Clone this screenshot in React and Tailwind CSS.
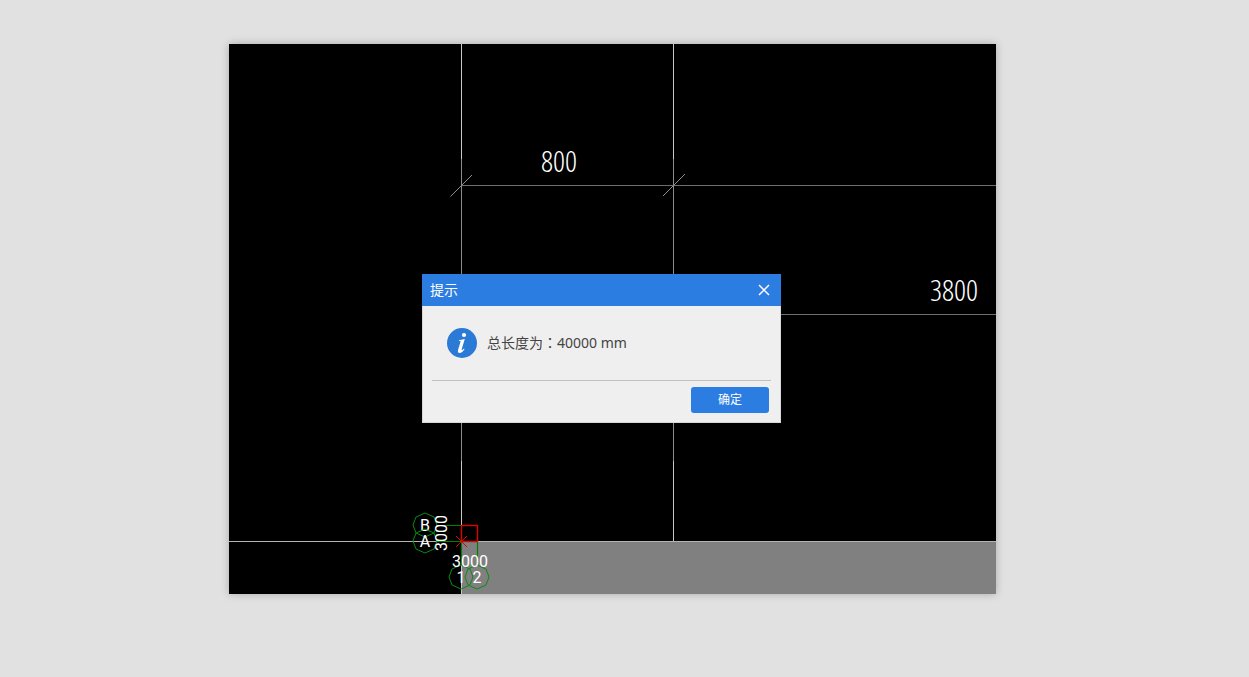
import { useState } from 'react';

const BUBBLES = [
    { label: 'B', x: 196, y: 481 },
    { label: 'A', x: 196, y: 497 },
    { label: '1', x: 232, y: 533 },
    { label: '2', x: 248, y: 533 }
];

const OCTAGON = '0,-12 9,-8 12,0 9,8 0,12 -9,8 -12,0 -9,-8';

function GridBubble({ label, x, y }) {
    return (
        <g transform={`translate(${x} ${y})`}>
            <polygon points={OCTAGON} fill="none" stroke="#0b8a12" strokeWidth="1" />
            <text y="6" textAnchor="middle" className="fill-white font-['Roboto',sans-serif] text-[16px]">{label}</text>
        </g>
    );
}

function Drawing() {
    return (
        <svg viewBox="0 0 767 550" className="block h-auto w-full bg-black">
            {/* ground area */}
            <rect x="233" y="498" width="534" height="52" fill="#808080" />

            {/* axis and dimension lines */}
            <g shapeRendering="crispEdges" fill="none">
                <path d="M232.5 0V115M232.5 417V550M444.5 0V115M444.5 417V497" stroke="#c8c8c8" />
                <path d="M232.5 115V417M444.5 115V417" stroke="#8c8c8c" />
                <path d="M232 141.5H767M444 270.5H767" stroke="#6e6e6e" />
                <path d="M0 497.5H767" stroke="#b4b4b4" />
            </g>
            <path d="M221.5 152.5L243 131M434 152L456 130" stroke="#8c8c8c" />

            {/* dimension values */}
            <g className="fill-white font-['Open_Sans_Condensed_Light','Open_Sans_Condensed','Roboto_Condensed',sans-serif] text-[30px] font-light">
                <text x="330" y="128" textAnchor="middle">800</text>
                <text x="725" y="257" textAnchor="middle">3800</text>
            </g>

            {/* grid axes */}
            <path d="M208 481.5H232M208 497.5H232M232.5 498V521M248.5 498V521" fill="none" stroke="#008000" strokeWidth="1.2" />
            {BUBBLES.map(b => <GridBubble key={b.label} {...b} />)}
            <g className="fill-white font-['Roboto',sans-serif] text-[16px]">
                <text x="241" y="523" textAnchor="middle">3000</text>
                <text transform="translate(218 489) rotate(-90)" textAnchor="middle">3000</text>
            </g>
            <rect x="232.5" y="481.5" width="16" height="16" fill="none" stroke="#e00000" strokeWidth="1.4" />
            <path d="M227 492L238 503M238 492L227 503" fill="none" stroke="#e00000" />
        </svg>
    );
}

function InfoIcon() {
    return (
        <svg viewBox="0 0 30 30" className="size-[30px] shrink-0" aria-hidden="true">
            <circle cx="15" cy="15" r="15" fill="#2a7ad6" />
            <circle cx="17" cy="7" r="2.1" fill="#fff" />
            <path d="M12 12.2L17.8 11L14.7 21.3C14.4 22.5 15.2 22.5 16.9 20.4L17.6 20.9C16 23.6 14.4 25 12.6 25C10.8 25 10.6 23.5 11.1 21.8L13.5 13.8C13.7 13 13.2 12.9 12 13Z" fill="#fff" />
        </svg>
    );
}

function MessageDialog({ onClose }) {
    return (
        <div role="dialog" aria-labelledby="dialog-title" className="absolute left-[193px] top-[230px] w-[359px] border border-t-0 border-[#d8d8d8] bg-[#efefef]">
            <div className="-mx-px flex h-8 items-center justify-between bg-[#2b7de1] px-2 text-white">
                <h2 id="dialog-title" className="text-sm">提示</h2>
                <button type="button" aria-label="关闭" onClick={onClose} className="flex size-[18px] items-center justify-center">
                    <svg viewBox="0 0 12 12" className="size-3" fill="none" stroke="currentColor" strokeWidth="1.5">
                        <path d="M1 1L11 11M11 1L1 11" />
                    </svg>
                </button>
            </div>
            <div className="flex h-[74px] items-center gap-[10px] px-6">
                <InfoIcon />
                <p className="font-['Noto_Sans','Noto_Sans_CJK_TC',sans-serif] text-sm text-[#444]">总长度为：40000 mm</p>
            </div>
            <div className="mx-[9px] flex justify-end border-t border-[#c0c0c0] px-[2px] pt-[6px] pb-[9px]">
                <button type="button" onClick={onClose} className="h-[26px] w-[78px] rounded-[3px] bg-[#2b7de1] text-xs text-white">确定</button>
            </div>
        </div>
    );
}

export default function App() {
    const [open, setOpen] = useState(true);

    return (
        <main className="min-h-screen bg-[#e1e1e1] pt-11 pr-[253px] pb-20 pl-[229px] font-['Noto_Sans','Noto_Sans_CJK_SC',sans-serif]">
            <div className="relative shadow-[0_0_8px_rgba(0,0,0,0.25)]">
                <Drawing />
                {open && <MessageDialog onClose={() => setOpen(false)} />}
            </div>
        </main>
    );
}
